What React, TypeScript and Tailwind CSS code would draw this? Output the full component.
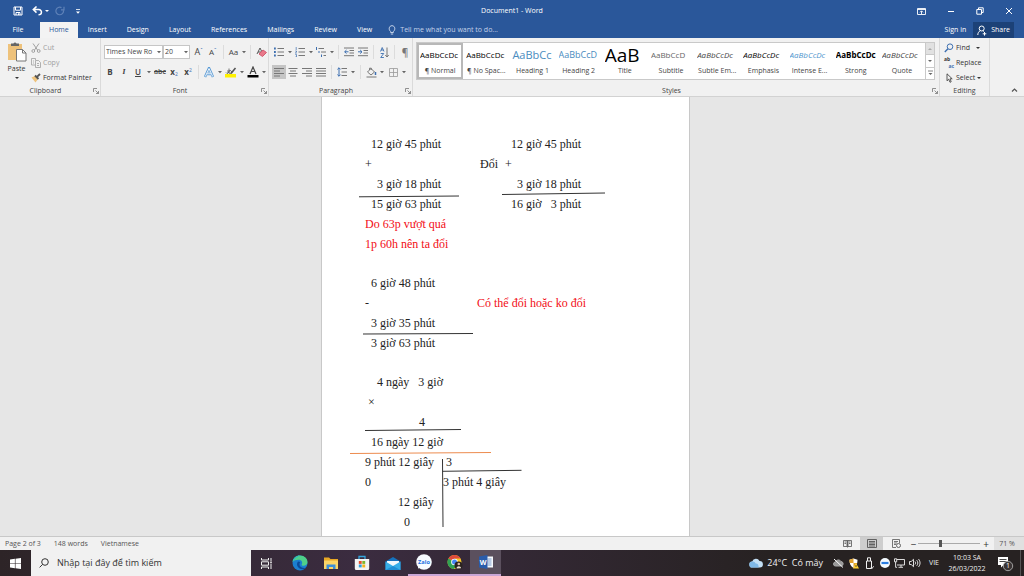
import React from 'react';

type IconProps = { children: React.ReactNode; className?: string; box?: string };

const Icon: React.FC<IconProps> = ({ children, className = 'h-3 w-3', box = '0 0 12 12' }) => (
  <svg className={`shrink-0 ${className}`} viewBox={box} fill="none" stroke="currentColor" aria-hidden="true">
    {children}
  </svg>
);

const Caret: React.FC<{ label: string }> = ({ label }) => (
  <button aria-label={label} className="flex h-[14px] w-2 items-center justify-center text-[#666]">
    <Icon className="h-1 w-1" box="0 0 4 4">
      <path d="M0 1h4L2 3.2z" fill="currentColor" stroke="none" />
    </Icon>
  </button>
);

const Tool: React.FC<{ label: string; active?: boolean; children: React.ReactNode }> = ({ label, active, children }) => (
  <button
    aria-label={label}
    className={`flex h-[14px] w-[14px] shrink-0 items-center justify-center ${active ? 'bg-[#c5c5c5]' : ''}`}
  >
    {children}
  </button>
);

const Divider: React.FC = () => <span className="mx-[3px] h-[14px] w-px bg-[#dcdcdc]" />;

const Launcher: React.FC<{ label: string }> = ({ label }) => (
  <button aria-label={label} className="flex h-[9px] w-[9px] items-center justify-center text-[#777]">
    <Icon className="h-[6px] w-[6px]" box="0 0 6 6">
      <path d="M.5 4V.5H4M2.500 2.500l3 3M5.500 3v2.500H3" strokeWidth=".8" />
    </Icon>
  </button>
);

type GroupProps = { title: string; className: string; launcher?: boolean; children: React.ReactNode };

const Group: React.FC<GroupProps> = ({ title, className, launcher = true, children }) => (
  <section aria-label={title} className={`flex flex-col border-r border-[#dadada] ${className}`}>
    <div className="flex-1">{children}</div>
    <div className="flex h-[11px] items-center">
      <span className="flex-1 text-center text-[#444]">{title}</span>
      {launcher && <Launcher label={`${title} settings`} />}
    </div>
  </section>
);

const tabs = ['Insert', 'Design', 'Layout', 'References', 'Mailings', 'Review', 'View'];

const styles = [
  { name: '¶ Normal', sample: 'AaBbCcDc', look: 'text-[8px] text-black' },
  { name: '¶ No Spac...', sample: 'AaBbCcDc', look: 'text-[8px] text-black' },
  { name: 'Heading 1', sample: 'AaBbCc', look: 'text-[11px] text-[#4a8cc0]' },
  { name: 'Heading 2', sample: 'AaBbCcD', look: 'text-[9px] text-[#4a8cc0]' },
  { name: 'Title', sample: 'AaB', look: 'text-[19px] text-black' },
  { name: 'Subtitle', sample: 'AaBbCcD', look: 'text-[8px] text-[#666]' },
  { name: 'Subtle Em...', sample: 'AaBbCcDc', look: 'text-[8px] text-[#444] italic' },
  { name: 'Emphasis', sample: 'AaBbCcDc', look: 'text-[8px] text-black italic' },
  { name: 'Intense E...', sample: 'AaBbCcDc', look: 'text-[8px] text-[#4f94cd] italic' },
  { name: 'Strong', sample: 'AaBbCcDc', look: 'text-[8px] text-black font-bold' },
  { name: 'Quote', sample: 'AaBbCcDc', look: 'text-[8px] text-[#444] italic' },
];

const TitleBar: React.FC = () => (
  <div className="grid h-[22px] grid-cols-[1fr_auto_1fr] items-center">
    <div className="flex h-[19px] items-center pl-[13px]">
      <button aria-label="Save">
        <Icon className="h-[10px] w-[10px]" box="0 0 10 10">
          <path d="M1 1h8v8H1zM2.500 1v3.200h5V1M3 9V6.500h4V9M5.500 9V7.300" />
        </Icon>
      </button>
      <button aria-label="Undo" className="ml-[9px]">
        <Icon className="h-[10px] w-[11px]" box="0 0 11 10">
          <path d="M4.500.5L1.300 3.600l3.200 3M1.500 3.600h5.200c3.800 0 3.600 5.200-.2 5.200" strokeWidth="1.500" />
        </Icon>
      </button>
      <button aria-label="Undo options" className="ml-[2px]">
        <Icon className="h-1 w-1" box="0 0 4 4"><path d="M0 1h4L2 3z" fill="currentColor" stroke="none" /></Icon>
      </button>
      <button aria-label="Repeat" className="ml-[6px] text-[#5f82b8]">
        <Icon className="h-[10px] w-[10px]" box="0 0 10 10">
          <path d="M6.500 1.600a3.800 3.800 0 1 0 2 3M9 .8v3H6" strokeWidth="1.200" />
        </Icon>
      </button>
      <button aria-label="Customize toolbar" className="ml-[11px]">
        <Icon className="h-[5px] w-1" box="0 0 4 5"><path d="M0 .5h4" strokeWidth=".8" /><path d="M0 2.500h4L2 4.700z" fill="currentColor" stroke="none" /></Icon>
      </button>
    </div>
    <h1>Document1 - Word</h1>
    <div className="flex h-[19px] items-center justify-end gap-[21px] pr-[11px]">
      <button aria-label="Ribbon display options">
        <Icon className="h-[9px] w-[9px]" box="0 0 9 9"><path d="M.5 1.500h8v6h-8zM.5 2.500h8M4.500 7V4M3 5.300L4.500 3.800 6 5.300" strokeWidth=".9" /></Icon>
      </button>
      <button aria-label="Minimize">
        <Icon className="h-2 w-2" box="0 0 8 8"><path d="M1 4.500h6" /></Icon>
      </button>
      <button aria-label="Restore">
        <Icon className="h-2 w-2" box="0 0 8 8"><path d="M.8 2.500h4.700v4.700H.8zM2.500 2.300V.8h4.700v4.700H5.700" /></Icon>
      </button>
      <button aria-label="Close">
        <Icon className="h-2 w-2" box="0 0 8 8"><path d="M1 1l6 6M7 1L1 7" /></Icon>
      </button>
    </div>
  </div>
);

const TabBar: React.FC = () => (
  <nav className="flex h-4 items-stretch">
    <button className="w-10 pr-1">File</button>
    <button className="bg-[#f3f3f3] px-[9px] text-[#2a579a]">Home</button>
    <div className="flex">
      {tabs.map((tab) => (
        <button key={tab} className="px-[10px]">{tab}</button>
      ))}
    </div>
    <label className="ml-[6px] flex flex-1 items-center gap-1 text-[#c3d1e8]">
      <Icon className="h-[10px] w-2" box="0 0 8 10">
        <path d="M2.600 6.500C.2 4.600 1 .7 4 .7s3.800 3.900 1.400 5.800v1H2.600zM2.800 9h2.400" />
      </Icon>
      <input
        aria-label="Tell me what you want to do"
        placeholder="Tell me what you want to do..."
        className="w-[130px] bg-transparent outline-none placeholder:text-[#c3d1e8]"
      />
    </label>
    <button className="px-[7px]">Sign in</button>
    <button className="mr-[10px] flex items-center gap-1 bg-[#1c4177] px-1">
      <Icon className="h-[11px] w-[10px]" box="0 0 10 11">
        <circle cx="4.700" cy="3.500" r="2.500" />
        <path d="M.8 10c0-2 1-3.500 2.500-4.300M6 5.700l1 .8M7.500 7v3.600M5.700 8.800h3.600" />
      </Icon>
      Share
    </button>
  </nav>
);

const ClipboardGroup: React.FC = () => (
  <Group title="Clipboard" className="w-[101px]">
    <div className="flex pl-[6px]">
      <button className="flex w-[21px] flex-col items-center pt-[3px] text-[#333]">
        <Icon className="h-[21px] w-5" box="0 0 20 21">
          <path d="M1 3h14v16H1z" fill="#eec27b" stroke="none" />
          <path d="M4 5V2.500h2.500a1.700 1.700 0 0 1 3 0H12V5z" fill="#666" stroke="none" />
          <path d="M9.500 8.500h6l3.500 3.500v8H9.500z" fill="#fff" stroke="#777" />
          <path d="M15.500 8.500V12H19" stroke="#777" />
        </Icon>
        <span className="pt-[2px] leading-[10px]">Paste</span>
        <Icon className="mt-[2px] h-1 w-1" box="0 0 4 4"><path d="M0 1h4L2 3z" fill="currentColor" stroke="none" /></Icon>
      </button>
      <div className="flex flex-col pl-1 pt-[2px]">
        <button className="flex h-[15px] items-center gap-[2px] text-[#a0a0a0]">
          <Icon className="h-[10px] w-[10px]" box="0 0 10 10">
            <path d="M2 .5l4.500 6.500M8 .5L3.500 7" /><circle cx="2.300" cy="8" r="1.400" /><circle cx="7.700" cy="8" r="1.400" />
          </Icon>
          Cut
        </button>
        <button className="flex h-[15px] items-center gap-[2px] text-[#a0a0a0]">
          <Icon className="h-[10px] w-[10px]" box="0 0 10 10">
            <path d="M4 7H.5V.5h4V2M4.500 2.500h3L9.500 4.500v5h-5zM6 5.500h2M6 7.500h2M2 3h1M2 5h1" strokeWidth=".8" />
          </Icon>
          Copy
        </button>
        <button className="flex h-[15px] items-center gap-[2px] whitespace-nowrap text-[#333]">
          <Icon className="h-[10px] w-[10px]" box="0 0 10 10">
            <path d="M.5 4.500L4 3l3 3-2.500 3.500z" fill="#eec27b" stroke="none" />
            <path d="M4 2.500L7.500 6M5.700 4.200L9 1" stroke="#555" strokeWidth="1.800" />
          </Icon>
          Format Painter
        </button>
      </div>
    </div>
  </Group>
);

const FontGroup: React.FC = () => (
  <Group title="Font" className="w-[168px]">
    <div className="flex flex-col gap-[6px] pl-[2px] pt-[7px] text-[#444]">
      <div className="flex h-[14px] items-center">
        <div className="relative ml-px">
          <select aria-label="Font name" className="block h-[14px] w-[59px] appearance-none border border-[#c6c6c6] bg-white pl-px leading-[12px]">
            <option>Times New Ro</option>
          </select>
          <span className="pointer-events-none absolute right-0 top-0"><Caret label="Font list" /></span>
        </div>
        <div className="relative">
          <select aria-label="Font size" className="block h-[14px] w-[27px] appearance-none border border-[#c6c6c6] bg-white pl-px leading-[12px]">
            <option>20</option>
          </select>
          <span className="pointer-events-none absolute right-0 top-0"><Caret label="Size list" /></span>
        </div>
        <span className="w-[2px]" />
        <Tool label="Grow font"><span className="text-[9px]">A</span><span className="-mt-1 text-[6px] text-[#3d6fb0]">ˆ</span></Tool>
        <Tool label="Shrink font"><span className="text-[8px]">A</span><span className="-mt-1 text-[6px] text-[#3d6fb0]">ˇ</span></Tool>
        <Divider />
        <Tool label="Change case"><span className="text-[8px]">Aa</span></Tool>
        <Caret label="Case options" />
        <Divider />
        <Tool label="Clear formatting">
          <Icon className="h-[11px] w-[11px]" box="0 0 11 11">
            <path d="M1 7l3-6 2 4M2 5h3" stroke="#555" />
            <path d="M3 7l4-4 3.500 2.500-4 4z" fill="#e8798a" stroke="#d45a70" />
          </Icon>
        </Tool>
      </div>
      <div className="flex h-[14px] items-center text-[8px]">
        <Tool label="Bold"><b>B</b></Tool>
        <Tool label="Italic"><i className="font-serif font-semibold">I</i></Tool>
        <Tool label="Underline"><span className="font-semibold underline">U</span></Tool>
        <Caret label="Underline options" />
        <Tool label="Strikethrough"><span className="text-[7px] font-semibold line-through">abc</span></Tool>
        <Tool label="Subscript"><b>x</b><span className="mt-1 text-[5px] text-[#3d6fb0]">2</span></Tool>
        <Tool label="Superscript"><b>x</b><span className="-mt-1 text-[5px] text-[#3d6fb0]">2</span></Tool>
        <Divider />
        <Tool label="Text effects">
          <Icon className="h-[11px] w-[10px]" box="0 0 10 11">
            <path d="M1 10L5 1l4 9M2.500 7h5" stroke="#5b9bd5" strokeWidth="2.400" />
            <path d="M1.300 9.500L5 1.500l3.700 8M3 6.800h4" stroke="#fff" strokeWidth=".9" />
          </Icon>
        </Tool>
        <Caret label="Effect options" />
        <Tool label="Highlight">
          <Icon className="h-3 w-3">
            <path d="M0 8h11v3.500H0z" fill="#fff100" stroke="none" />
            <path d="M1 6.500a1.500 1.500 0 1 0 2-2v2.500M4 2.500V7a1.500 1.500 0 1 0 0-2" stroke="#555" strokeWidth=".8" />
            <path d="M6 7.500L10.500 2" stroke="#555" strokeWidth="1.600" />
          </Icon>
        </Tool>
        <Caret label="Highlight colors" />
        <Tool label="Font color">
          <Icon className="h-3 w-3">
            <path d="M.5 9h11v2.500H.5z" fill="#000" stroke="none" />
            <path d="M3 8l3-7 3 7M4 5.500h4" stroke="#444" strokeWidth="1.200" />
          </Icon>
        </Tool>
        <Caret label="Font colors" />
      </div>
    </div>
  </Group>
);

const ParagraphGroup: React.FC = () => (
  <Group title="Paragraph" className="w-[144px]">
    <div className="flex flex-col gap-[6px] pl-[3px] pt-[7px] text-[#777]">
      <div className="flex h-[14px] items-center">
        <Tool label="Bullets">
          <Icon className="h-[10px] w-[10px]" box="0 0 10 10">
            <path d="M3.500 1.500H10M3.500 5H10M3.500 8.500H10" />
            <path d="M0 1.500h1.800M0 5h1.800M0 8.500h1.800" stroke="#3d6fb0" strokeWidth="1.800" />
          </Icon>
        </Tool>
        <Caret label="Bullet library" />
        <Tool label="Numbering">
          <Icon className="h-[10px] w-[10px]" box="0 0 10 10">
            <path d="M3.500 1.500H10M3.500 5H10M3.500 8.500H10" />
            <path d="M1.200 0v3M.3 4h1.200v1L.3 6h1.500M.3 7.500h1.200V10H.3" stroke="#3d6fb0" strokeWidth=".7" />
          </Icon>
        </Tool>
        <Caret label="Number library" />
        <Tool label="Multilevel list">
          <Icon className="h-[10px] w-[10px]" box="0 0 10 10">
            <path d="M2.500 1.500H8M5 5h5M7.500 8.500H10" />
            <path d="M.5 0v3M3 4v2M5.500 7.500V10" stroke="#3d6fb0" />
          </Icon>
        </Tool>
        <Caret label="List library" />
        <Divider />
        <Tool label="Decrease indent">
          <Icon className="h-[10px] w-[10px]" box="0 0 10 10">
            <path d="M0 1h10M5.500 3.500H10M5.500 6H10M0 8.700h10" />
            <path d="M4.500 4.800H.7M2.500 3L.7 4.800l1.800 1.800" stroke="#3d6fb0" />
          </Icon>
        </Tool>
        <Tool label="Increase indent">
          <Icon className="h-[10px] w-[10px]" box="0 0 10 10">
            <path d="M0 1h10M5.500 3.500H10M5.500 6H10M0 8.700h10" />
            <path d="M0 4.800h4M2.200 3L4 4.800 2.200 6.600" stroke="#3d6fb0" />
          </Icon>
        </Tool>
        <Divider />
        <Tool label="Sort">
          <Icon className="h-[11px] w-[9px]" box="0 0 9 11">
            <path d="M.5 4.500L2.200.5 4 4.500M1 3h2.500M.7 6.500h3l-3 4h3.200" stroke="#3d6fb0" strokeWidth=".9" />
            <path d="M7 .5v9.500M5.300 8L7 10l1.700-2" />
          </Icon>
        </Tool>
        <Divider />
        <Tool label="Show marks"><span className="text-[10px] font-semibold">¶</span></Tool>
      </div>
      <div className="flex h-[14px] items-center">
        <Tool label="Align left" active>
          <Icon className="h-[9px] w-[10px]" box="0 0 10 9"><path d="M0 .5h10M0 3h6M0 5.500h10M0 8h6" /></Icon>
        </Tool>
        <Tool label="Center">
          <Icon className="h-[9px] w-[10px]" box="0 0 10 9"><path d="M.5 .5h9M2 3h6M.5 5.500h9M2 8h6" /></Icon>
        </Tool>
        <Tool label="Align right">
          <Icon className="h-[9px] w-[10px]" box="0 0 10 9"><path d="M0 .5h10M4 3h6M0 5.500h10M4 8h6" /></Icon>
        </Tool>
        <Tool label="Justify">
          <Icon className="h-[9px] w-[10px]" box="0 0 10 9"><path d="M0 .5h10M0 3h10M0 5.500h10M0 8h10" /></Icon>
        </Tool>
        <Divider />
        <Tool label="Line spacing">
          <Icon className="h-[10px] w-[10px]" box="0 0 10 10">
            <path d="M4.500 1.500H10M4.500 5H10M4.500 8.500H10" />
            <path d="M2 .8v8.400M.4 2.400L2 .8l1.600 1.600M.4 7.600L2 9.200l1.600-1.600" stroke="#3d6fb0" />
          </Icon>
        </Tool>
        <Caret label="Spacing options" />
        <Divider />
        <Tool label="Shading">
          <Icon className="h-[11px] w-[11px]" box="0 0 11 11">
            <path d="M1.500 5L5 1.500 8.500 5 5 8zM3.500 3V1.200h1.800V3M.5 10h10" />
            <path d="M9.500 5v3" stroke="#3d6fb0" strokeWidth="1.500" />
          </Icon>
        </Tool>
        <Caret label="Shading colors" />
        <Tool label="Borders">
          <Icon className="h-[9px] w-[9px]" box="0 0 9 9">
            <path d="M.5.5h8v8h-8zM4.500.5v8M.5 4.500h8" stroke="#999" strokeWidth=".8" />
          </Icon>
        </Tool>
        <Caret label="Border options" />
      </div>
    </div>
  </Group>
);

const StylesGroup: React.FC = () => (
  <Group title="Styles" className="min-w-0 flex-1">
    <div className="ml-[3px] mr-1 mt-1 flex h-[38px] border border-[#c9c9c9] bg-white">
      <div className="flex min-w-0 flex-1">
        {styles.map((style, i) => (
          <button
            key={style.name}
            className={`flex min-w-0 flex-1 flex-col ${
              i === 0 ? 'border-2 border-[#b8b8b8] px-px' : 'px-[3px] py-[2px]'
            }`}
          >
            <span className={`flex h-5 w-full items-center overflow-x-clip whitespace-nowrap ${style.look}`}>{style.sample}</span>
            <span className="w-full whitespace-nowrap text-center leading-[11px] text-[#444]">{style.name}</span>
          </button>
        ))}
      </div>
      <div className="flex w-[9px] flex-col divide-y divide-[#c9c9c9] border-l border-[#c9c9c9] text-[#666]">
        <button aria-label="Scroll styles up" className="flex flex-1 items-center justify-center bg-[#e1e1e1] text-[#aaa]">
          <Icon className="h-1 w-1" box="0 0 4 4"><path d="M0 3h4L2 1z" fill="currentColor" stroke="none" /></Icon>
        </button>
        <button aria-label="Scroll styles down" className="flex flex-1 items-center justify-center">
          <Icon className="h-1 w-1" box="0 0 4 4"><path d="M0 1h4L2 3z" fill="currentColor" stroke="none" /></Icon>
        </button>
        <button aria-label="More styles" className="flex flex-1 items-center justify-center">
          <Icon className="h-[6px] w-[5px]" box="0 0 5 6"><path d="M0 1h5" strokeWidth=".8" /><path d="M.5 3h4L2.500 5z" fill="currentColor" stroke="none" /></Icon>
        </button>
      </div>
    </div>
  </Group>
);

const EditingGroup: React.FC = () => (
  <Group title="Editing" className="w-[50px]" launcher={false}>
    <div className="flex flex-col pl-1 pt-[2px] text-[#333]">
      <button className="flex h-[15px] items-center gap-[2px]">
        <Icon className="h-[10px] w-[10px]" box="0 0 10 10">
          <circle cx="6" cy="3.700" r="2.800" stroke="#3d6fb0" /><path d="M4 5.800L.8 9" stroke="#3d6fb0" strokeWidth="1.400" />
        </Icon>
        Find
        <Icon className="ml-1 h-1 w-1" box="0 0 4 4"><path d="M0 1h4L2 3z" fill="currentColor" stroke="none" /></Icon>
      </button>
      <button className="flex h-[15px] items-center gap-[2px]">
        <span className="flex w-[10px] flex-col text-[5px] font-bold leading-[7px]">
          <span className="text-left">ab</span>
          <span className="text-right text-[#3d6fb0]">ac</span>
        </span>
        Replace
      </button>
      <button className="flex h-[15px] items-center gap-[2px]">
        <Icon className="h-[10px] w-[10px]" box="0 0 10 10">
          <path d="M3 .8v7l1.700-1.600L6 9.300l1.200-.6L6 5.800h2.200z" strokeWidth=".8" />
        </Icon>
        Select
        <Icon className="h-1 w-1" box="0 0 4 4"><path d="M0 1h4L2 3z" fill="currentColor" stroke="none" /></Icon>
      </button>
    </div>
  </Group>
);

const Page: React.FC = () => (
  <article className="relative w-[369px] shrink-0 whitespace-pre border-x border-[#c8c8c8] bg-white pl-[43px] pt-[37px] font-['Liberation_Serif',serif] text-[12px] leading-5 text-[#222]">
    <div className="flex">
      <div className="w-[115px]">
        <p>{'  12 giờ 45 phút'}</p>
        <p>+</p>
        <p>{'    3 giờ 18 phút'}</p>
        <p>{'  15 giờ 63 phút'}</p>
        <p className="text-[#f20d15]">Do 63p vượt quá</p>
        <p className="text-[#f20d15]">1p 60h nên ta đổi</p>
      </div>
      <p className="w-[25px] pt-5">Đổi</p>
      <div>
        <p>{'  12 giờ 45 phút'}</p>
        <p>+</p>
        <p>{'    3 giờ 18 phút'}</p>
        <p>{'  16 giờ   3 phút'}</p>
      </div>
    </div>

    <div className="flex pt-[19px]">
      <div className="w-28">
        <p>{'  6 giờ 48 phút'}</p>
        <p>-</p>
        <p>{'  3 giờ 35 phút'}</p>
        <p>{'  3 giờ 63 phút'}</p>
      </div>
      <p className="pt-5 text-[#f20d15]">Có thể đổi hoặc ko đổi</p>
    </div>

    <div className="pt-[19px]">
      <p>{'    4 ngày   3 giờ'}</p>
      <p>{' ×'}</p>
      <p>{'                  4'}</p>
      <p>{'  16 ngày 12 giờ'}</p>
    </div>

    <div className="flex">
      <div className="w-[78px]">
        <p>9 phút 12 giây</p>
        <p>0</p>
        <p>{'           12 giây'}</p>
        <p>{'             0'}</p>
      </div>
      <div>
        <p>{' 3'}</p>
        <p>3 phút 4 giây</p>
      </div>
    </div>

    {/* Ruled lines drawn by hand over the sums */}
    <svg className="pointer-events-none absolute left-0 top-0 h-[440px] w-[367px]" viewBox="0 0 367 440" stroke="#333" fill="none" aria-hidden="true">
      <path d="M37 99.800l100-.8M180 97.500l103-1.500M41 237l110-.5M43 333.500l96-1M120.500 362l.5 68M120.500 374.300l79-1" />
      <path d="M28 356.500l141-1" stroke="#ed8c4f" />
    </svg>
  </article>
);

const StatusBar: React.FC = () => (
  <div className="flex h-[14px] shrink-0 items-center border-t border-[#c8c8c8] bg-[#f1f1f1] pl-[5px] text-[#555]">
    <div className="flex flex-1 gap-[13px]">
      <span>Page 2 of 3</span>
      <span>148 words</span>
      <span>Vietnamese</span>
    </div>
    <button aria-label="Read mode" className="flex w-[26px] justify-center">
      <Icon className="h-[9px] w-[9px]" box="0 0 9 9"><path d="M.5 1.500h3.500v6H.5zM5 1.500h3.500v6H5zM1.500 3h1.500M1.500 4.500h1.500M6 3h1.500M6 4.500h1.500M4.500 1v7.500" strokeWidth=".8" /></Icon>
    </button>
    <button aria-label="Print layout" className="flex h-full w-[23px] items-center justify-center bg-[#cdcdcd]">
      <Icon className="h-[9px] w-[10px]" box="0 0 10 9"><path d="M.5.5h9v8h-9zM2 2.500h6M2 4h6M2 5.500h6M2 7h6" strokeWidth=".9" /></Icon>
    </button>
    <button aria-label="Web layout" className="flex w-[26px] justify-center">
      <Icon className="h-[9px] w-[9px]" box="0 0 9 9"><path d="M4 8.500H.5v-8h7V4M2 2.500h4M2 4h3M2 5.500h2" strokeWidth=".8" /><circle cx="6.500" cy="6.500" r="2" strokeWidth=".9" /></Icon>
    </button>
    <button aria-label="Zoom out" className="w-[9px] text-[10px] leading-3 text-[#333]">−</button>
    <input
      type="range"
      aria-label="Zoom"
      min={10}
      max={170}
      defaultValue={66}
      className="h-[9px] w-[62px] appearance-none bg-transparent bg-[linear-gradient(#aaa,#aaa)] bg-[length:100%_1px] bg-center bg-no-repeat [&::-webkit-slider-thumb]:h-[7px] [&::-webkit-slider-thumb]:w-[3px] [&::-webkit-slider-thumb]:appearance-none [&::-webkit-slider-thumb]:bg-[#555]"
    />
    <button aria-label="Zoom in" className="w-[12px] text-[10px] leading-3 text-[#333]">+</button>
    <button className="ml-[2px] h-full w-[30px] bg-[#e0e0e0] pr-[4px]">71 %</button>
  </div>
);

const apps = [
  {
    name: 'Edge',
    state: '',
    art: (
      <>
        <circle cx="8" cy="8" r="7.500" fill="#1b7fd0" />
        <path d="M.6 7C1 3 4 .5 8 .5c4.500 0 7.500 3 7.500 6.500 0 2.500-2 3.800-4 3.800-1.500 0-2.300-.6-1.700-1.500C11 7 9.500 4.700 6.500 4.700 4 4.700 1.500 5.500.6 7z" fill="#4fd08a" />
        <path d="M.6 7C1 3 4 .5 8 .5 5 2 3 3 .6 7z" fill="#2ab5c8" />
        <path d="M6 6.500c-2.500 3 0 8 5 7.800 1.200-.1 2.200-.8 3-1.600-3 .8-6.500-.4-6.500-3.500 0-1 .3-1.700.8-2.200z" fill="#0b4a99" />
      </>
    ),
  },
  {
    name: 'File Explorer',
    state: '',
    art: (
      <>
        <path d="M1 2.500h5l1.500 1.500H15v10H1z" fill="#e9a825" />
        <path d="M1 5.500h14v8.500H1z" fill="#fbd567" />
        <path d="M3.500 14v-4.500h9V14h-2.500v-2H6v2z" fill="#3c8fd8" />
      </>
    ),
  },
  {
    name: 'Store',
    state: '',
    art: (
      <>
        <path d="M5 4V1.500h6V4" fill="none" stroke="#35a5dd" strokeWidth="1.300" />
        <path d="M.8 4h14.400v9.500a1.500 1.500 0 0 1-1.500 1.500H2.300A1.500 1.500 0 0 1 .8 13.500z" fill="#f4f4f4" />
        <path d="M4.800 6h2.900v2.900H4.800z" fill="#e5502c" />
        <path d="M8.300 6h2.900v2.900H8.300z" fill="#7db72f" />
        <path d="M4.800 9.500h2.900v2.900H4.800z" fill="#2f9fdc" />
        <path d="M8.300 9.500h2.900v2.900H8.300z" fill="#f5b51e" />
      </>
    ),
  },
  {
    name: 'Mail',
    state: '',
    art: (
      <>
        <path d="M.5 6.500L8 2l7.500 4.500V15H.5z" fill="#1672bd" />
        <path d="M2 6h12v5H2z" fill="#f2f8fc" />
        <path d="M.5 6.500L8 11l7.500-4.500V15H.5z" fill="#36aee8" />
        <path d="M.5 15L8 11l7.500 4z" fill="#1f8fd6" />
      </>
    ),
  },
  {
    name: 'Zalo',
    state: 'border-b-2 border-[#c9a6d6]',
    art: (
      <>
        <circle cx="8" cy="8" r="7.800" fill="#f7fbff" />
        <path d="M2 14.500l.5-4 3 3z" fill="#f7fbff" />
        <text x="8" y="10" textAnchor="middle" fontSize="5.600" fontWeight="700" fill="#1a6fe0">Zalo</text>
      </>
    ),
  },
  {
    name: 'Chrome',
    state: 'border-b-2 border-[#c9a6d6]',
    art: (
      <>
        <circle cx="7.500" cy="8" r="7" fill="#f6c927" />
        <path d="M7.500 8L1.400 4.500A7 7 0 0 1 13.600 4.500H7.500z" fill="#df4a3c" />
        <path d="M7.500 8L1.400 4.500A7 7 0 0 0 7 15l3-5z" fill="#2fa254" />
        <circle cx="7.500" cy="8" r="3.300" fill="#fff" />
        <circle cx="7.500" cy="8" r="2.500" fill="#4285f4" />
        <circle cx="11.500" cy="11.500" r="4" fill="#2b2320" />
        <circle cx="11.800" cy="10" r="1.300" fill="#d9b8a0" />
        <path d="M9.500 14.500c0-3 4.500-3 4.500-.3z" fill="#e8ddd5" />
      </>
    ),
  },
  {
    name: 'Word',
    state: 'border-b-2 border-[#c9a6d6] bg-[#5b505e]',
    art: (
      <>
        <path d="M8 2.500h7v11H8z" fill="#f5f8fc" />
        <path d="M9.500 5h4M9.500 7h4M9.500 9h4M9.500 11h4" stroke="#6d94c9" strokeWidth=".9" />
        <path d="M1 2.500L9.500 1v14L1 13.500z" fill="#2a5caa" />
        <text x="5.200" y="10.500" textAnchor="middle" fontSize="7" fontWeight="700" fill="#fff">W</text>
      </>
    ),
  },
];

const Taskbar: React.FC = () => (
  <footer className="flex h-[26px] shrink-0 items-stretch bg-linear-to-r from-[#2d2427] via-[#3b2c40] via-35% to-[#272222] to-75% text-[#f0f0f0]">
    <button aria-label="Start" className="flex w-[31px] items-center justify-center">
      <Icon className="h-[11px] w-[11px]" box="0 0 11 11">
        <path d="M0 1.500L4.900.8v4.400H0zM5.500.7L11 0v5.200H5.500zM0 5.800h4.900v4.400L0 9.500zM5.500 5.800H11V11l-5.500-.7z" fill="#fff" stroke="none" />
      </Icon>
    </button>
    <label className="flex w-[220px] items-center gap-2 bg-[#f1f1f1] pl-2 text-[#333]">
      <Icon className="h-[10px] w-[10px]" box="0 0 10 10"><circle cx="6" cy="4" r="3.300" /><path d="M3.600 6.400L.6 9.400" /></Icon>
      <input
        aria-label="Tìm kiếm"
        placeholder="Nhập tại đây để tìm kiếm"
        className="min-w-0 flex-1 bg-transparent text-[9px] outline-none placeholder:text-[#333]"
      />
    </label>
    <button aria-label="Task view" className="flex w-[33px] items-center justify-center pr-[3px]">
      <Icon className="h-[11px] w-[11px]" box="0 0 11 11">
        <path d="M.5 0v2h7V0M.5 3.800h7v3.400h-7zM.5 11V9h7v2M10 0v3M10 5.500V11" />
        <path d="M9.200 3.500h1.600v1.600H9.200z" fill="currentColor" stroke="none" />
      </Icon>
    </button>
    <div className="flex flex-1">
      {apps.map((app) => (
        <button key={app.name} aria-label={app.name} className={`flex w-[31px] items-center justify-center ${app.state}`}>
          <svg className="h-4 w-4" viewBox="0 0 16 16" aria-hidden="true">{app.art}</svg>
        </button>
      ))}
    </div>
    <button className="flex items-center gap-1 whitespace-pre pr-[8px] text-[9px]">
      <Icon className="h-[10px] w-[14px]" box="0 0 14 10">
        <path d="M3.500 9.500a3 3 0 0 1-.3-6A4 4 0 0 1 10.500 3a3.200 3.200 0 0 1 .3 6.500z" fill="#c4e0f5" stroke="none" />
        <path d="M3.500 9.500a3 3 0 0 1-.3-6c1.500-.3 3 .6 3.500 2 1.500-.5 3 .5 3 4z" fill="#7fb8e6" stroke="none" />
      </Icon>
      {'24°C  Có mây'}
    </button>
    <div className="flex items-center">
      <button aria-label="OneDrive" className="flex w-[15px] justify-center text-[#aaa]">
        <Icon className="h-[10px] w-[11px]" box="0 0 11 10"><path d="M2.500 8a2 2 0 0 1 0-4 3 3 0 0 1 5.500-.5A2.300 2.300 0 0 1 8.500 8z" fill="#999" /><path d="M1 1l9 8.500" stroke="#fff" /></Icon>
      </button>
      <button aria-label="Security" className="flex w-[15px] justify-center">
        <Icon className="h-[11px] w-[10px]" box="0 0 10 11">
          <path d="M4.500.5l4 1.200c0 4-1 6.300-4 8.300-3-2-4-4.300-4-8.300z" fill="#fff" stroke="none" />
          <path d="M4.500.5v4.500H.8A10 10 0 0 1 .5 1.700zM4.500 5h3.700c-.6 2.200-1.800 3.700-3.700 5z" fill="#e0a02a" stroke="none" />
          <path d="M7 5l3 5.500H4z" fill="#ffcf30" stroke="none" /><path d="M7 7v2" stroke="#333" strokeWidth=".8" />
        </Icon>
      </button>
      <button aria-label="USB" className="flex w-[16px] justify-center">
        <Icon className="h-3 w-[9px]" box="0 0 9 12"><path d="M1.500 4h5v7.500h-5zM2.500 4V.8h3V4" /><path d="M6 10.500l1 1 1.700-2.300" strokeWidth=".9" /></Icon>
      </button>
      <button aria-label="Zalo tray" className="flex w-[15px] justify-center">
        <Icon className="h-[10px] w-[10px]" box="0 0 10 10"><circle cx="5" cy="5" r="5" fill="#f4faff" stroke="none" /><path d="M1.500 5h7" stroke="#2a7de1" strokeWidth="2.200" /></Icon>
      </button>
      <button aria-label="Network" className="flex w-[15px] justify-center">
        <Icon className="h-[10px] w-[11px]" box="0 0 11 10"><path d="M3 1.500h7.500V7H3M7 7v2M4.500 9.300H9M.5.8h2.200v3H.5zM1.600 4v5.300h1.500" strokeWidth=".9" /></Icon>
      </button>
      <button aria-label="Volume" className="flex w-[15px] justify-center">
        <Icon className="h-[10px] w-3" box="0 0 12 10"><path d="M.5 3.500h1.700L4.500 1.300v7.400L2.200 6.500H.5zM6 3.500c.8.8.8 2.200 0 3M7.700 2.200c1.500 1.500 1.500 4.100 0 5.600M9.400 1c2.200 2.200 2.200 5.800 0 8" strokeWidth=".9" /></Icon>
      </button>
      <button className="w-[24px]">VIE</button>
    </div>
    <button className="flex w-[42px] flex-col items-center justify-center leading-[11px]">
      <span>10:03 SA</span>
      <span>26/03/2022</span>
    </button>
    <button aria-label="Notifications" className="flex w-[26px] items-center justify-end">
      <Icon className="h-[17px] w-[17px]" box="0 0 17 17">
        <path d="M1 2h10v8H6.500L4 12.500V10H1z" fill="#fff" stroke="none" />
        <path d="M2.500 4.500h7M2.500 6.500h7" stroke="#333" strokeWidth=".9" />
        <circle cx="11" cy="11" r="4.700" fill="#3a3434" stroke="#bbb" strokeWidth=".8" />
        <text x="11" y="13.400" textAnchor="middle" fontSize="7" fill="#fff" stroke="none">1</text>
      </Icon>
    </button>
    <span className="ml-[6px] w-px bg-[#555]" />
    <span className="w-[3px]" />
  </footer>
);

const App: React.FC = () => {
  return (
    <div className="flex h-screen flex-col overflow-hidden bg-[#e6e6e6] font-['Open_Sans',sans-serif] text-[7px] leading-[10px]">
      <header className="shrink-0 bg-[#2a579a] text-white">
        <TitleBar />
        <TabBar />
      </header>

      <div className="flex h-[59px] shrink-0 border-b border-[#d2d2d2] bg-[#f1f1f1]">
        <ClipboardGroup />
        <FontGroup />
        <ParagraphGroup />
        <StylesGroup />
        <EditingGroup />
        <div className="flex w-[34px] items-end justify-end pb-[2px] pr-[6px] text-[#555]">
          <button aria-label="Collapse ribbon">
            <Icon className="h-2 w-[7px]" box="0 0 7 8"><path d="M1 5.500L3.500 3 6 5.500" strokeWidth="1.200" /></Icon>
          </button>
        </div>
      </div>

      <main className="flex min-h-0 flex-1 justify-center overflow-hidden pr-[13px]">
        <Page />
      </main>

      <StatusBar />
      <Taskbar />
    </div>
  );
};

export default App;
